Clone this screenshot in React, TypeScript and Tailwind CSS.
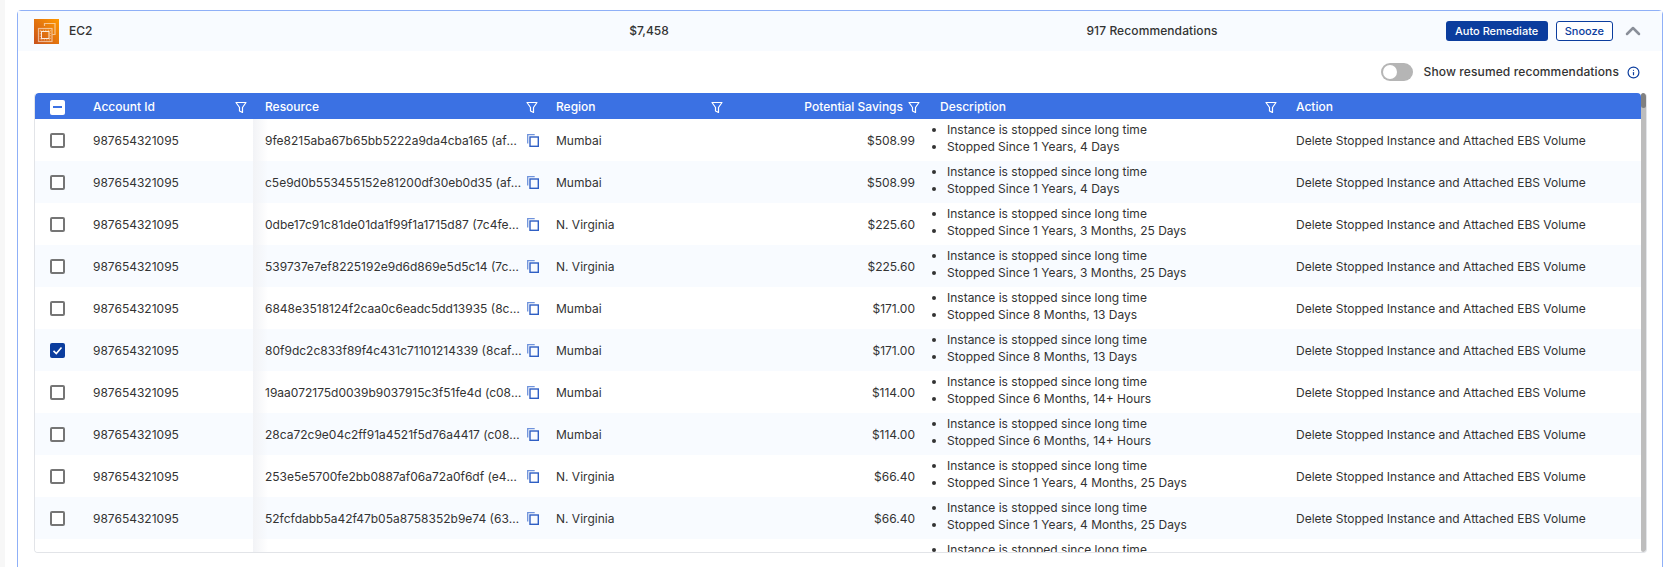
import { ChevronUp, Info } from "lucide-react";

interface Row {
  account: string;
  resource: string;
  region: string;
  savings: string;
  since: string;
  checked?: boolean;
}

const rows: Row[] = [
  { account: "987654321095", resource: "9fe8215aba67b65bb5222a9da4cba165 (af-south-1a)", region: "Mumbai", savings: "$508.99", since: "Stopped Since 1 Years, 4 Days" },
  { account: "987654321095", resource: "c5e9d0b553455152e81200df30eb0d35 (af-south-1a)", region: "Mumbai", savings: "$508.99", since: "Stopped Since 1 Years, 4 Days" },
  { account: "987654321095", resource: "0dbe17c91c81de01da1f99f1a1715d87 (7c4fe-name)", region: "N. Virginia", savings: "$225.60", since: "Stopped Since 1 Years, 3 Months, 25 Days" },
  { account: "987654321095", resource: "539737e7ef8225192e9d6d869e5d5c14 (7c4fe-name)", region: "N. Virginia", savings: "$225.60", since: "Stopped Since 1 Years, 3 Months, 25 Days" },
  { account: "987654321095", resource: "6848e3518124f2caa0c6eadc5dd13935 (8caf-name)", region: "Mumbai", savings: "$171.00", since: "Stopped Since 8 Months, 13 Days" },
  { account: "987654321095", resource: "80f9dc2c833f89f4c431c71101214339 (8caf-name)", region: "Mumbai", savings: "$171.00", since: "Stopped Since 8 Months, 13 Days", checked: true },
  { account: "987654321095", resource: "19aa072175d0039b9037915c3f51fe4d (c08-name)", region: "Mumbai", savings: "$114.00", since: "Stopped Since 6 Months, 14+ Hours" },
  { account: "987654321095", resource: "28ca72c9e04c2ff91a4521f5d76a4417 (c08-name)", region: "Mumbai", savings: "$114.00", since: "Stopped Since 6 Months, 14+ Hours" },
  { account: "987654321095", resource: "253e5e5700fe2bb0887af06a72a0f6df (e4-name)", region: "N. Virginia", savings: "$66.40", since: "Stopped Since 1 Years, 4 Months, 25 Days" },
  { account: "987654321095", resource: "52fcfdabb5a42f47b05a8758352b9e74 (63-name)", region: "N. Virginia", savings: "$66.40", since: "Stopped Since 1 Years, 4 Months, 25 Days" },
  { account: "", resource: "", region: "", savings: "", since: "Stopped Since 1 Years, 4 Months, 25 Days" },
];

function FilterIcon() {
  return (
    <svg width="12" height="13" viewBox="0 0 12 13" fill="none" stroke="white" strokeWidth="1.2" strokeLinejoin="round" className="shrink-0">
      <path d="M1 1.5h10L7.5 6.5v5l-3-1.5V6.5z" />
    </svg>
  );
}

function CopyIcon() {
  return (
    <svg width="12" height="13" viewBox="0 0 12 13" fill="none" className="ml-[5px] shrink-0">
      <path d="M.7 9.5V.7h7" stroke="#6f93dc" strokeWidth="1.3" />
      <rect x="3" y="3" width="8.3" height="9.3" stroke="#2f5fc4" strokeWidth="1.4" />
    </svg>
  );
}

function Ec2Logo() {
  return (
    <svg width="25" height="25" viewBox="0 0 25 25">
      <defs>
        <linearGradient id="ec2" x1="0" y1="1" x2="1" y2="0">
          <stop offset="0" stopColor="#c8511b" />
          <stop offset="1" stopColor="#f90" />
        </linearGradient>
      </defs>
      <rect width="25" height="25" fill="url(#ec2)" />
      <g fill="none" stroke="white">
        <path d="M10.5 7V4.5h10.5v11h-2.5" strokeOpacity="0.55" strokeWidth="1.2" />
        <rect x="4.5" y="9.5" width="13.5" height="13" strokeOpacity="0.55" strokeWidth="1.2" />
        <rect x="7.5" y="12.5" width="7.5" height="7" strokeOpacity="0.85" />
        <rect x="6.3" y="11.3" width="10" height="9.5" strokeOpacity="0.6" strokeDasharray="1 1.5" />
      </g>
    </svg>
  );
}

function Checkbox({ checked }: { checked?: boolean }) {
  if (checked) {
    return (
      <span className="flex h-[15px] w-[15px] items-center justify-center rounded-[2px] bg-[#0b3d9e]">
        <svg width="11" height="11" viewBox="0 0 11 11" fill="none" stroke="white" strokeWidth="1.6">
          <path d="M1.5 5.8l2.8 2.7 5.2-6" />
        </svg>
      </span>
    );
  }
  return <span className="block h-[15px] w-[15px] rounded-[2px] border-2 border-[#757575] bg-white" />;
}

export default function App() {
  return (
    <div className="flex h-[567px] overflow-hidden bg-white font-['Inter',sans-serif] text-xs text-[#333]">
      <div className="w-[5px] shrink-0 bg-[#f7f7f7]" />
      <div className="min-w-0 flex-1 pl-[12px] pr-[6px] pt-[10px]">
        <div className="h-[600px] rounded-t-[4px] border border-[#8fb0f7]">
          <div className="flex h-[40px] items-center bg-[#f8fbff] pl-[16px] pr-[17px]">
            <div className="flex w-[300px] items-center gap-[6px]">
              <Ec2Logo />
              <span className="ml-[4px] font-medium">EC2</span>
            </div>
            <div className="w-[630px] text-center font-medium">$7,458</div>
            <div className="w-[376px] text-center font-medium tracking-[0.1px]">917 Recommendations</div>
            <div className="ml-auto flex items-center">
              <button className="h-[20px] rounded-[3px] bg-[#0b3d9e] px-[9.5px] text-[11px] font-medium text-white">Auto Remediate</button>
              <button className="ml-[8px] h-[20px] rounded-[3px] border border-[#0b3d9e] bg-white px-[8px] text-[11px] font-medium text-[#0b3d9e]">Snooze</button>
              <ChevronUp size={24} strokeWidth={2.5} className="ml-[8px] text-[#8a8f99]" />
            </div>
          </div>

          <div className="flex h-[42px] items-center justify-end pr-[22px]">
            <span className="relative mr-[11px] block h-[18px] w-[32px] rounded-full bg-[#b5b5b5]">
              <span className="absolute left-[2px] top-[2px] h-[14px] w-[14px] rounded-full bg-white" />
            </span>
            <span className="font-medium tracking-[0.12px]">Show resumed recommendations</span>
            <Info size={13} strokeWidth={2.2} className="ml-[8px] text-[#0b3d9e]" />
          </div>

          <div className="ml-[16px] mr-[15px] flex h-[460px] overflow-hidden rounded-[4px] border border-t-0 border-[#e2e4e8]">
            <div className="min-w-0 flex-1">
              <div className="flex h-[26px] items-center rounded-t-[4px] bg-[#3b71e3] pt-[2px] font-medium text-white">
                <div className="flex w-[44px] justify-center">
                  <span className="flex h-[15px] w-[15px] items-center justify-center rounded-[2px] bg-white">
                    <span className="h-[2px] w-[9px] bg-[#3b71e3]" />
                  </span>
                </div>
                <div className="flex w-[174px] items-center justify-between pl-[14px] pr-[6px]">
                  Account Id <FilterIcon />
                </div>
                <div className="flex w-[303px] items-center justify-between pl-[12px] pr-[18px]">
                  Resource <FilterIcon />
                </div>
                <div className="flex w-[184px] items-center justify-between pr-[17px]">
                  Region <FilterIcon />
                </div>
                <div className="flex w-[185px] items-center justify-end gap-[5px] pr-[5px]">
                  Potential Savings <FilterIcon />
                </div>
                <div className="flex w-[356px] items-center justify-between pl-[15px] pr-[4px]">
                  Description <FilterIcon />
                </div>
                <div className="pl-[15px]">Action</div>
              </div>

              {rows.map((row, i) => (
                <div key={i} className={`flex h-[42px] items-center ${i % 2 === 1 ? "bg-[#f8fbff]" : "bg-white"}`}>
                  <div className="flex w-[44px] justify-center">{row.account && <Checkbox checked={row.checked} />}</div>
                  <div className="w-[174px] pl-[14px] pt-[1px]">{row.account}</div>
                  <div className="flex h-full w-[303px] items-center bg-gradient-to-r from-[#f2f3f6] to-transparent to-[15px] pl-[12px]">
                    {row.resource && (
                      <>
                        <span className="w-[257px] truncate pt-[1px]">{row.resource}</span>
                        <CopyIcon />
                      </>
                    )}
                  </div>
                  <div className="w-[184px] pt-[1px]">{row.region}</div>
                  <div className="w-[185px] pr-[10px] pt-[1px] text-right">{row.savings}</div>
                  <ul className="w-[356px] list-disc self-start pl-[22px] pt-[2px] leading-[17px]">
                    <li>Instance is stopped since long time</li>
                    <li>{row.since}</li>
                  </ul>
                  <div className="whitespace-nowrap pl-[15px] pt-[1px]">{row.account && "Delete Stopped Instance and Attached EBS Volume"}</div>
                </div>
              ))}
            </div>

            <div className="w-[5px] shrink-0 rounded-full bg-[#bdbdbd]">
              <div className="h-[15px] rounded-full bg-[#808080]" />
            </div>
          </div>
        </div>
      </div>
    </div>
  );
}
